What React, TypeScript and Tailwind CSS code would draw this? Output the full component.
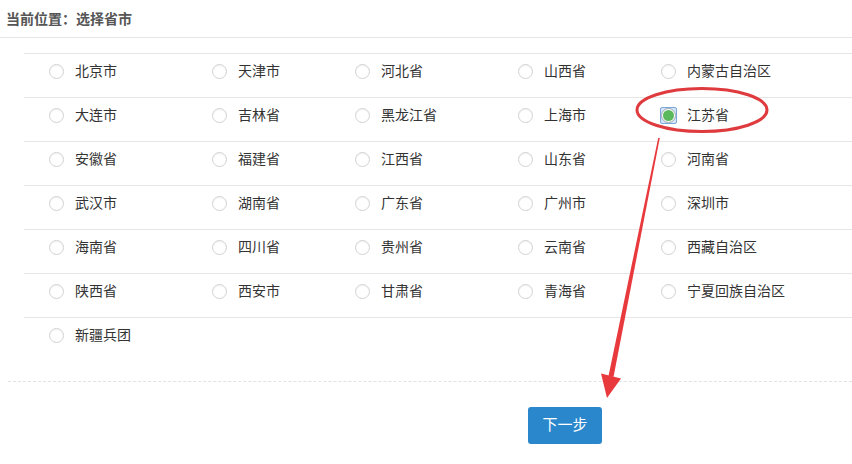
const rows: string[][] = [
  ['北京市', '天津市', '河北省', '山西省', '内蒙古自治区'],
  ['大连市', '吉林省', '黑龙江省', '上海市', '江苏省'],
  ['安徽省', '福建省', '江西省', '山东省', '河南省'],
  ['武汉市', '湖南省', '广东省', '广州市', '深圳市'],
  ['海南省', '四川省', '贵州省', '云南省', '西藏自治区'],
  ['陕西省', '西安市', '甘肃省', '青海省', '宁夏回族自治区'],
  ['新疆兵团'],
];

const selected = '江苏省';

const Radio = ({ checked }: { checked: boolean }) => {
  if (checked) {
    return (
      <span className="relative w-[15px] h-[15px] shrink-0">
        <span className="absolute -inset-[1px] rounded-[2px] border border-[#7ea8dc] bg-[#d3e4f7]"></span>
        <span className="absolute inset-0 rounded-full border border-[#9aa6b2] bg-white p-[1px]">
          <span className="block w-full h-full rounded-full bg-[#5cb85c]"></span>
        </span>
      </span>
    );
  }
  return (
    <span className="w-[15px] h-[15px] shrink-0 rounded-full border border-[#d2d2d2] bg-white shadow-[inset_0_1px_1px_rgba(0,0,0,0.06)]"></span>
  );
};

export default function App() {
  return (
    <div className="relative w-[852px] h-[464px] overflow-hidden bg-white font-['Liberation_Sans','Noto_Sans_CJK_SC',sans-serif]">
      <div className="h-[38px] border-b border-[#e6e6e6] pl-[6px] pt-[7px]">
        <span className="text-[14px] leading-[18px] font-bold text-[#555]">当前位置：选择省市</span>
      </div>

      <div className="mt-[15px] ml-[24px]">
        {rows.map((row, i) => (
          <div
            key={i}
            className="h-[44px] border-t border-[#e6e6e6] grid grid-cols-[163px_143px_163px_143px_1fr] pl-[25px] pt-[7px]"
          >
            {row.map((name) => (
              <label key={name} className="flex items-center gap-[11px] h-[20px] text-[14px] text-[#333]">
                <Radio checked={name === selected} />
                <span>{name}</span>
              </label>
            ))}
          </div>
        ))}
      </div>

      <div className="mt-[20px] ml-[8px] border-t border-dashed border-[#e2e2e2]"></div>

      <button className="mt-[25px] ml-[528px] w-[74px] h-[37px] rounded-[3px] bg-[#2a87cc] text-white text-[15px] flex items-center justify-center">
        下一步
      </button>

      <svg className="absolute inset-0 pointer-events-none" width="852" height="464" viewBox="0 0 852 464">
        <ellipse cx="702" cy="110" rx="65" ry="21.5" fill="none" stroke="#df3b3f" strokeWidth="3" />
        <polygon points="658.2,138 659.8,138 613.5,377 608.5,376" fill="#e8393d" />
        <polygon points="601,373.5 621,378.5 607,398" fill="#e8393d" />
      </svg>
    </div>
  );
}
